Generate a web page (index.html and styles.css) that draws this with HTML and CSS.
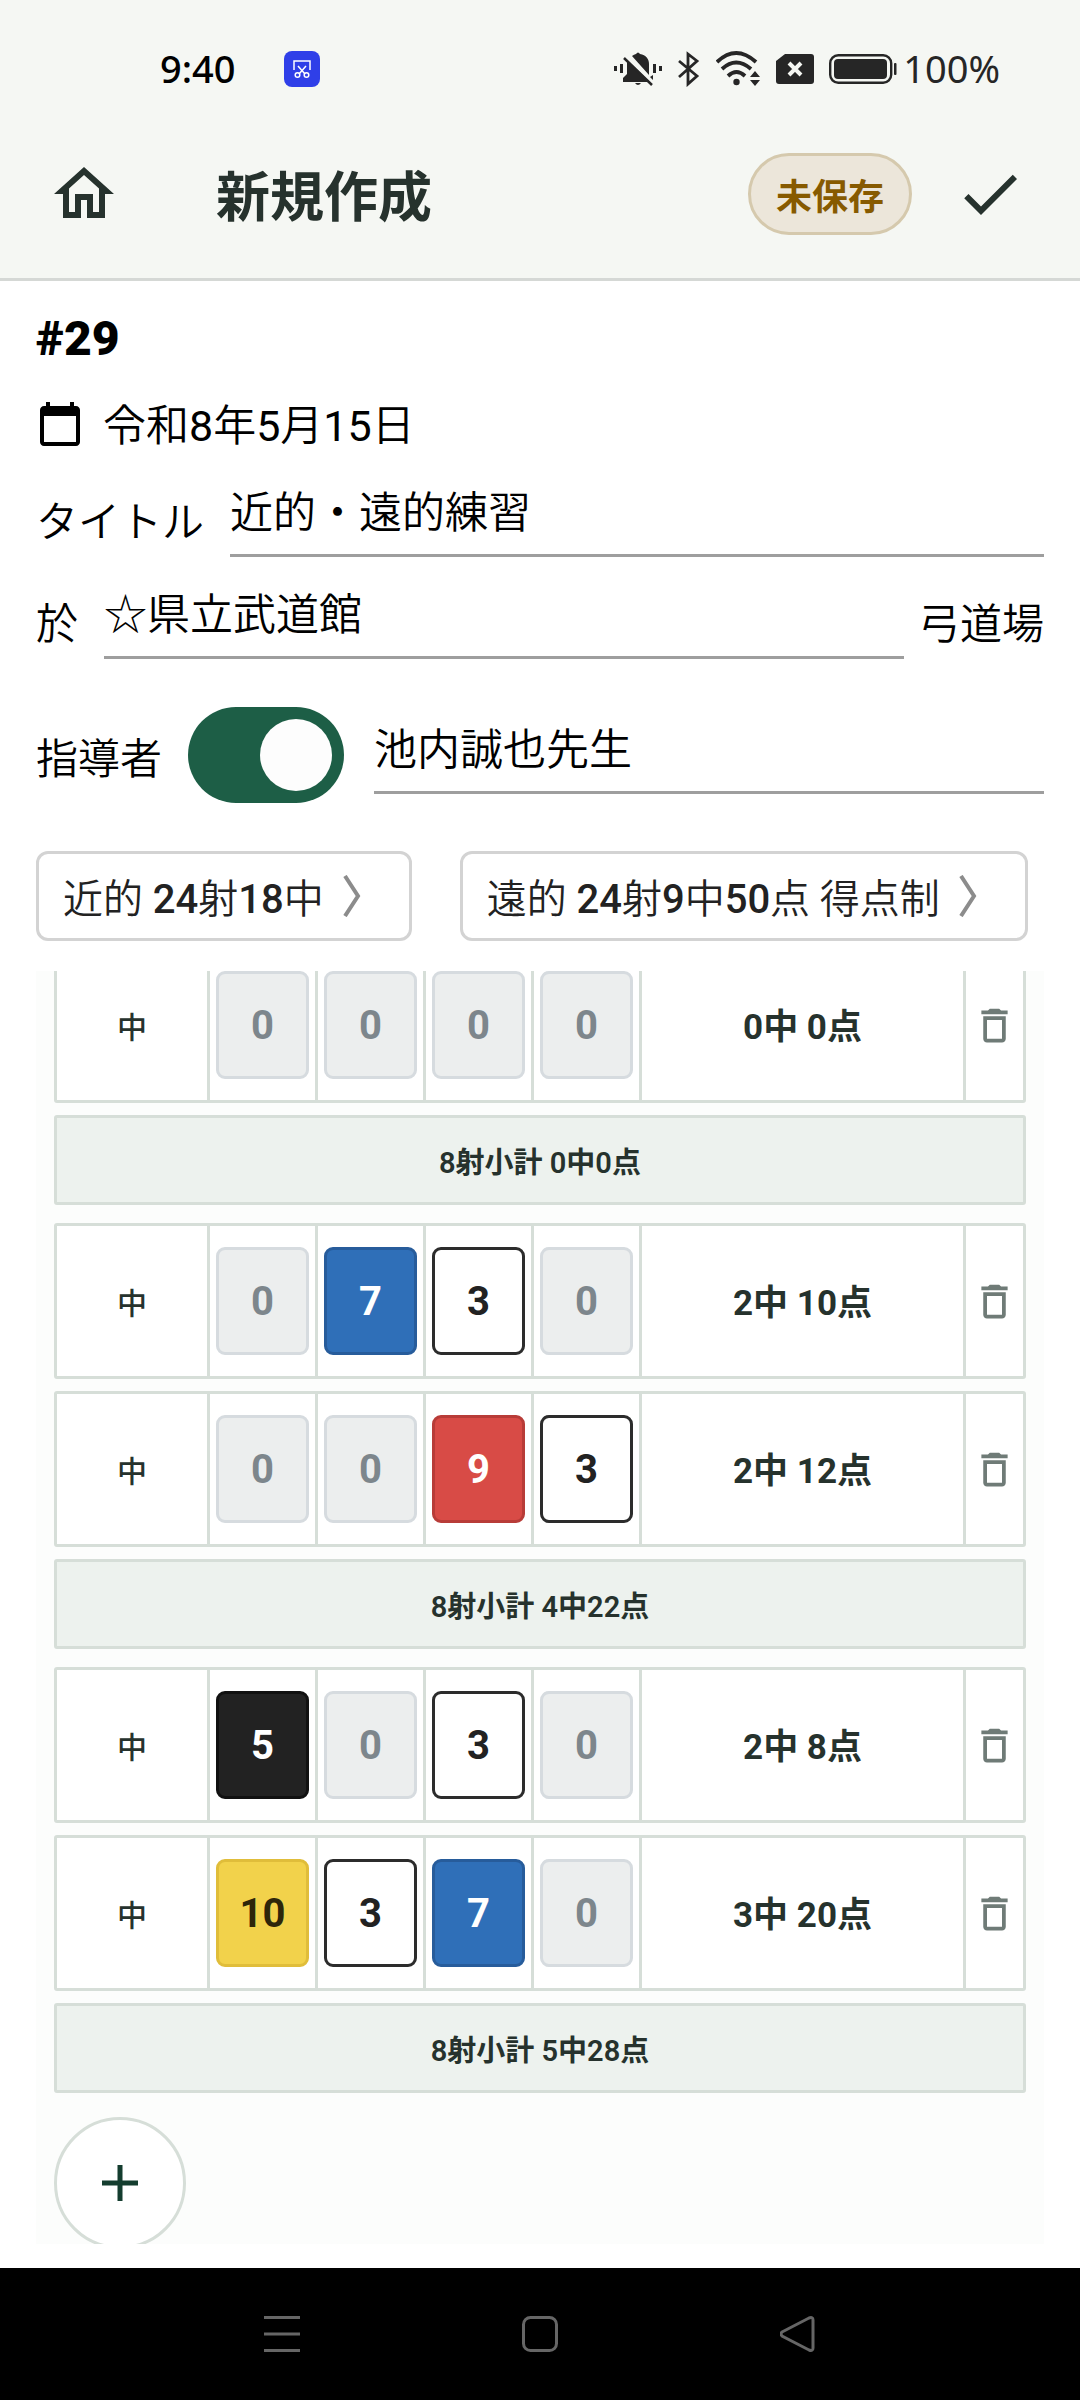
FILE: index.html
```html
<!DOCTYPE html>
<html lang="ja">
<head>
    <meta charset="UTF-8">
    <meta name="viewport" content="width=device-width, initial-scale=1.0">
    <title>新規作成</title>
    <link rel="stylesheet" href="styles.css">
</head>
<body>
    <!-- 共通アイコン -->
    <svg class="defs" aria-hidden="true">
        <symbol id="icon-delete" viewBox="0 0 24 24">
            <path d="M16 9v10H8V9h8m-1.500-6h-5l-1 1H5v2h14V4h-3.500l-1-1zM18 7H6v12c0 1.100.9 2 2 2h8c1.100 0 2-.9 2-2V7z"/>
        </symbol>
    </svg>

    <div class="app">
        <div class="status-bar">
            <span class="time">9:40</span>
            <svg class="clip-icon" viewBox="0 0 36 36">
                <rect width="36" height="36" rx="8" fill="#2f3fe8"/>
                <g fill="none" stroke="#fff" stroke-width="1.500">
                    <path d="M10 19v-9h16v9"/>
                    <path d="M14 15l7 8M22 15l-7 8"/>
                    <circle cx="13.500" cy="24" r="2.300"/>
                    <circle cx="22.500" cy="24" r="2.300"/>
                </g>
            </svg>
            <div class="status-icons">
                <svg width="48" height="36" viewBox="0 0 48 36">
                    <path d="M22 3q2-3 4 0c6 1 9 5 9 10v11L18 5q2-1.500 4-2zM13 9l22 22H9v-4l4-4zM39 24l-3 2 3 3zM21 32h6q-3 4-6 0z"/>
                    <path d="M10 7l28 27" stroke="#262626" stroke-width="2.500"/>
                    <path d="M13 6l27 26" stroke="#f5f7f3" stroke-width="2"/>
                    <path d="M0 15h3v5H0zM6 13h3v9H6zM39 13h3v9h-3zM45 15h3v5h-3z"/>
                </svg>
                <svg width="24" height="36" viewBox="0 0 24 36">
                    <path d="M2 10l18 15-9 8V3l9 7L2 26" fill="none" stroke="#262626" stroke-width="2.800"/>
                </svg>
                <svg width="45" height="36" viewBox="0 0 45 36">
                    <g fill="none" stroke="#262626" stroke-width="3.800">
                        <path d="M1 11q19-18 39 0"/>
                        <path d="M6 18q14-13 29 0"/>
                        <path d="M12 25q8.500-8 17 0"/>
                    </g>
                    <circle cx="20.500" cy="31" r="3.200"/>
                    <path d="M39 20l5 6H34zM34 29h10l-5 6z"/>
                </svg>
                <svg width="38" height="30" viewBox="0 0 38 30">
                    <path d="M9 0h26q3 0 3 3v24q0 3-3 3H3q-3 0-3-3V7z"/>
                    <path d="M13 9l12 12M25 9L13 21" stroke="#f5f7f3" stroke-width="4"/>
                </svg>
                <svg width="68" height="30" viewBox="0 0 68 30">
                    <rect x="1.200" y="1.200" width="61" height="27.600" rx="8" fill="none" stroke="#262626" stroke-width="2.400"/>
                    <rect x="5" y="5" width="53" height="20" rx="4"/>
                    <rect x="65" y="9" width="2.500" height="12" rx="1"/>
                </svg>
                <span class="percent">100%</span>
            </div>
        </div>

        <header class="app-bar">
            <button class="icon-btn" type="button" aria-label="ホーム">
                <svg viewBox="0 0 24 24"><path d="M12 5.690l5 4.500V18h-2v-6H9v6H7v-7.810l5-4.500M12 3L2 12h3v8h6v-6h2v6h6v-8h3L12 3z"/></svg>
            </button>
            <h1>新規作成</h1>
            <span class="badge">未保存</span>
            <button class="icon-btn" type="button" aria-label="保存">
                <svg viewBox="0 0 24 24"><path d="M9 16.170L4.830 12l-1.420 1.410L9 19 21 7l-1.410-1.410z"/></svg>
            </button>
        </header>

        <main>
            <h2>#29</h2>
            <div class="date">
                <svg viewBox="0 0 24 24"><path d="M20 3h-1V1h-2v2H7V1H5v2H4c-1.100 0-2 .9-2 2v16c0 1.100.9 2 2 2h16c1.100 0 2-.9 2-2V5c0-1.100-.9-2-2-2zm0 18H4V8h16v13z"/></svg>
                <span>令和<b>8</b>年<b>5</b>月<b>15</b>日</span>
            </div>

            <form class="info-form">
                <div class="field">
                    <label for="title">タイトル</label>
                    <input type="text" id="title" name="title" value="近的・遠的練習">
                </div>
                <div class="field">
                    <label for="place">於</label>
                    <input type="text" id="place" name="place" value="☆県立武道館">
                    <span class="suffix">弓道場</span>
                </div>
                <div class="field field-coach">
                    <label for="coach-on">指導者</label>
                    <input type="checkbox" class="switch" id="coach-on" name="coach-on" role="switch" checked>
                    <input type="text" id="coach" name="coach" aria-label="指導者名" value="池内誠也先生">
                </div>
            </form>

            <div class="tabs">
                <button type="button">
                    <span>近的 <b>24</b>射<b>18</b>中</span>
                    <svg viewBox="0 0 18 42"><path d="M2 1l13 20L2 41"/></svg>
                </button>
                <button type="button">
                    <span>遠的 <b>24</b>射<b>9</b>中<b>50</b>点 得点制</span>
                    <svg viewBox="0 0 18 42"><path d="M2 1l13 20L2 41"/></svg>
                </button>
            </div>

            <section class="panel">
                <table class="scores">
                    <tbody>
                        <tr class="score-row">
                            <th scope="row">中</th>
                            <td><button class="tile miss">0</button></td>
                            <td><button class="tile miss">0</button></td>
                            <td><button class="tile miss">0</button></td>
                            <td><button class="tile miss">0</button></td>
                            <td class="sum">0中 0点</td>
                            <td><button class="delete" aria-label="削除"><svg><use href="#icon-delete"/></svg></button></td>
                        </tr>
                        <tr class="subtotal"><td colspan="7">8射小計 0中0点</td></tr>
                    </tbody>
                    <tbody>
                        <tr class="score-row">
                            <th scope="row">中</th>
                            <td><button class="tile miss">0</button></td>
                            <td><button class="tile blue">7</button></td>
                            <td><button class="tile white">3</button></td>
                            <td><button class="tile miss">0</button></td>
                            <td class="sum">2中 10点</td>
                            <td><button class="delete" aria-label="削除"><svg><use href="#icon-delete"/></svg></button></td>
                        </tr>
                        <tr class="score-row">
                            <th scope="row">中</th>
                            <td><button class="tile miss">0</button></td>
                            <td><button class="tile miss">0</button></td>
                            <td><button class="tile red">9</button></td>
                            <td><button class="tile white">3</button></td>
                            <td class="sum">2中 12点</td>
                            <td><button class="delete" aria-label="削除"><svg><use href="#icon-delete"/></svg></button></td>
                        </tr>
                        <tr class="subtotal"><td colspan="7">8射小計 4中22点</td></tr>
                    </tbody>
                    <tbody>
                        <tr class="score-row">
                            <th scope="row">中</th>
                            <td><button class="tile black">5</button></td>
                            <td><button class="tile miss">0</button></td>
                            <td><button class="tile white">3</button></td>
                            <td><button class="tile miss">0</button></td>
                            <td class="sum">2中 8点</td>
                            <td><button class="delete" aria-label="削除"><svg><use href="#icon-delete"/></svg></button></td>
                        </tr>
                        <tr class="score-row">
                            <th scope="row">中</th>
                            <td><button class="tile yellow">10</button></td>
                            <td><button class="tile white">3</button></td>
                            <td><button class="tile blue">7</button></td>
                            <td><button class="tile miss">0</button></td>
                            <td class="sum">3中 20点</td>
                            <td><button class="delete" aria-label="削除"><svg><use href="#icon-delete"/></svg></button></td>
                        </tr>
                        <tr class="subtotal"><td colspan="7">8射小計 5中28点</td></tr>
                    </tbody>
                </table>
                <button class="add" type="button" aria-label="行を追加">
                    <svg viewBox="0 0 36 36"><path d="M18 0v36M0 18h36"/></svg>
                </button>
            </section>
        </main>

        <nav class="nav-bar">
            <button type="button" aria-label="メニュー">
                <svg viewBox="0 0 36 36"><path d="M0 1.500h36M0 18h36M0 34.500h36"/></svg>
            </button>
            <button type="button" aria-label="ホーム画面">
                <svg viewBox="0 0 36 36"><rect x="1.500" y="1.500" width="33" height="33" rx="7"/></svg>
            </button>
            <button type="button" aria-label="戻る">
                <svg viewBox="0 0 36 36"><path d="M2 16L29 2q4-1.500 4 2v28q0 3.500-4 2L2 20q-2-2 0-4z"/></svg>
            </button>
        </nav>
    </div>
</body>
</html>
```
FILE: styles.css
```css
* {
    box-sizing: border-box;
}
body {
    margin: 0;
    font-family: Roboto, "Noto Sans CJK JP", sans-serif;
    font-size: 42px;
    color: #000;
    background-color: #fff;
}
button, input {
    font: inherit;
    color: inherit;
}
button {
    padding: 0;
    border: none;
    background: none;
    cursor: pointer;
}
svg {
    display: block;
    flex-shrink: 0;
}
.defs {
    display: none;
}
.app {
    display: flex;
    flex-direction: column;
    height: 100vh;
}

/* ステータスバー */
.status-bar {
    display: flex;
    align-items: center;
    height: 108px;
    padding: 30px 80px 0 160px;
    background-color: #f5f7f3;
    font-family: "Noto Sans", sans-serif;
    font-size: 38px;
    font-weight: 500;
}
.time, .percent {
    padding-bottom: 2px;
}
.clip-icon {
    width: 36px;
    height: 36px;
    margin-left: 48px;
}
.status-icons {
    display: flex;
    align-items: center;
    gap: 15px;
    margin-left: auto;
    color: #262626;
    fill: #262626;
}
.percent {
    margin-left: -9px;
    font-weight: 400;
}

/* ヘッダー */
.app-bar {
    display: flex;
    align-items: center;
    height: 173px;
    padding: 2px 54px 0 48px;
    background-color: #f5f7f3;
    border-bottom: 3px solid #d5d8d5;
    color: #26322d;
}
.icon-btn svg {
    width: 72px;
    height: 72px;
    fill: #26322d;
}
h1 {
    margin: 0 auto 0 96px;
    padding-top: 10px;
    font-size: 54px;
    font-weight: 700;
    line-height: 72px;
}
.badge {
    margin-right: 42px;
    padding: 18px 25px 10px;
    border: 3px solid #d5c9ad;
    border-radius: 42px;
    background-color: #ece6da;
    color: #875a00;
    font-size: 36px;
    font-weight: 700;
    line-height: 48px;
}

/* 基本情報 */
main {
    flex: 1;
    display: flex;
    flex-direction: column;
    min-height: 0;
    padding: 28px 36px 24px;
}
h2 {
    margin: 0;
    font-size: 48px;
    font-weight: 900;
    line-height: 60px;
}
.date {
    display: flex;
    align-items: center;
    gap: 19px;
    height: 48px;
    margin: 31px 0;
    font-size: 43px;
    font-weight: 350;
}
.date span {
    padding-bottom: 4px;
}
.date b {
    font-weight: 400;
}
.date svg {
    width: 48px;
    height: 48px;
}
.info-form {
    display: flex;
    flex-direction: column;
    gap: 24px;
    font-weight: 350;
}
.field {
    display: flex;
    align-items: center;
}
.field-coach {
    margin-top: 24px;
}
.field label {
    margin-right: 26px;
}
.suffix {
    margin-left: 14px;
}
input[type="text"] {
    flex: 1;
    min-width: 0;
    height: 78px;
    padding: 0 0 16px;
    border: none;
    border-bottom: 3px solid #9e9e9e;
    border-radius: 0;
    background: none;
    font-size: 43px;
    outline: none;
}
.switch {
    appearance: none;
    width: 156px;
    height: 96px;
    margin: 0 30px 0 0;
    padding: 12px;
    border-radius: 48px;
    background-color: #a9b3ae;
}
.switch::before {
    content: "";
    display: block;
    width: 72px;
    height: 72px;
    border-radius: 50%;
    background-color: #fdfdfd;
}
.switch:checked {
    background-color: #1d5e46;
}
.switch:checked::before {
    margin-left: auto;
}

/* 近的・遠的の切り替え */
.tabs {
    display: flex;
    gap: 48px;
    margin: 48px 0 30px;
}
.tabs button {
    display: flex;
    align-items: center;
    gap: 19px;
    height: 90px;
    padding: 0 48px 0 24px;
    border: 3px solid #d3d3d3;
    border-radius: 12px;
    color: #222;
    font-size: 40px;
    font-weight: 350;
    white-space: nowrap;
}
.tabs b {
    font-weight: 500;
}
.tabs svg {
    width: 18px;
    height: 42px;
    fill: none;
    stroke: #8c8c8c;
    stroke-width: 4;
}

/* 得点表 */
.panel {
    flex: 1;
    min-height: 0;
    padding: 0 18px;
    overflow-y: auto;
    scrollbar-width: none;
    background-color: #fcfdfc;
    color: #26322d;
}
.scores {
    display: block;
    margin-top: -24px;
}
.scores tbody {
    display: flex;
    flex-direction: column;
    gap: 12px;
    margin-bottom: 18px;
}
.scores tr {
    border: 3px solid #d6ded8;
    border-radius: 3px;
    background-color: #fff;
}
.score-row {
    display: grid;
    grid-template-columns: 153px repeat(4, 108px) 1fr 57px;
    height: 156px;
}
.scores th, .scores td {
    display: flex;
    align-items: center;
    justify-content: center;
    padding: 0;
}
.score-row > * {
    border-right: 3px solid #d6ded8;
}
.score-row > :last-child {
    border-right: none;
}
.scores th {
    font-size: 30px;
    font-weight: 500;
}
.scores .sum {
    padding-bottom: 3px;
    font-size: 35px;
    font-weight: 700;
}
.scores .subtotal {
    display: block;
    background-color: #edf2ee;
}
.subtotal td {
    height: 84px;
    font-size: 29px;
    font-weight: 600;
}
.tile {
    width: 93px;
    height: 108px;
    border: 3px solid;
    border-radius: 9px;
    font-size: 40px;
    font-weight: 700;
}
.miss {
    background-color: #eceeee;
    border-color: #d6dbdf;
    color: #7d868c;
}
.white {
    background-color: #fff;
    border-color: #2c2c2c;
    color: #222;
}
.black {
    background-color: #222;
    border-color: #111;
    color: #fff;
}
.blue {
    background-color: #2f6fb8;
    border-color: #275c9b;
    color: #fff;
}
.red {
    background-color: #d84b46;
    border-color: #b83c38;
    color: #fff;
}
.yellow {
    background-color: #f2d24b;
    border-color: #e0bd3a;
    color: #2e260a;
}
.delete svg {
    width: 45px;
    height: 45px;
    fill: #6f7b77;
}
.add {
    display: flex;
    align-items: center;
    justify-content: center;
    width: 132px;
    height: 132px;
    margin-top: 24px;
    border: 3px solid #d6ded8;
    border-radius: 50%;
    background-color: #fff;
}
.add svg {
    width: 36px;
    height: 36px;
    fill: none;
    stroke: #143d2f;
    stroke-width: 5;
}

/* ナビゲーションバー */
.nav-bar {
    display: grid;
    grid-template-columns: repeat(3, 1fr);
    height: 132px;
    padding: 0 153px;
    background-color: #000;
}
.nav-bar button {
    display: flex;
    align-items: center;
    justify-content: center;
}
.nav-bar svg {
    width: 36px;
    height: 36px;
    fill: none;
    stroke: #666;
    stroke-width: 3;
}
```
